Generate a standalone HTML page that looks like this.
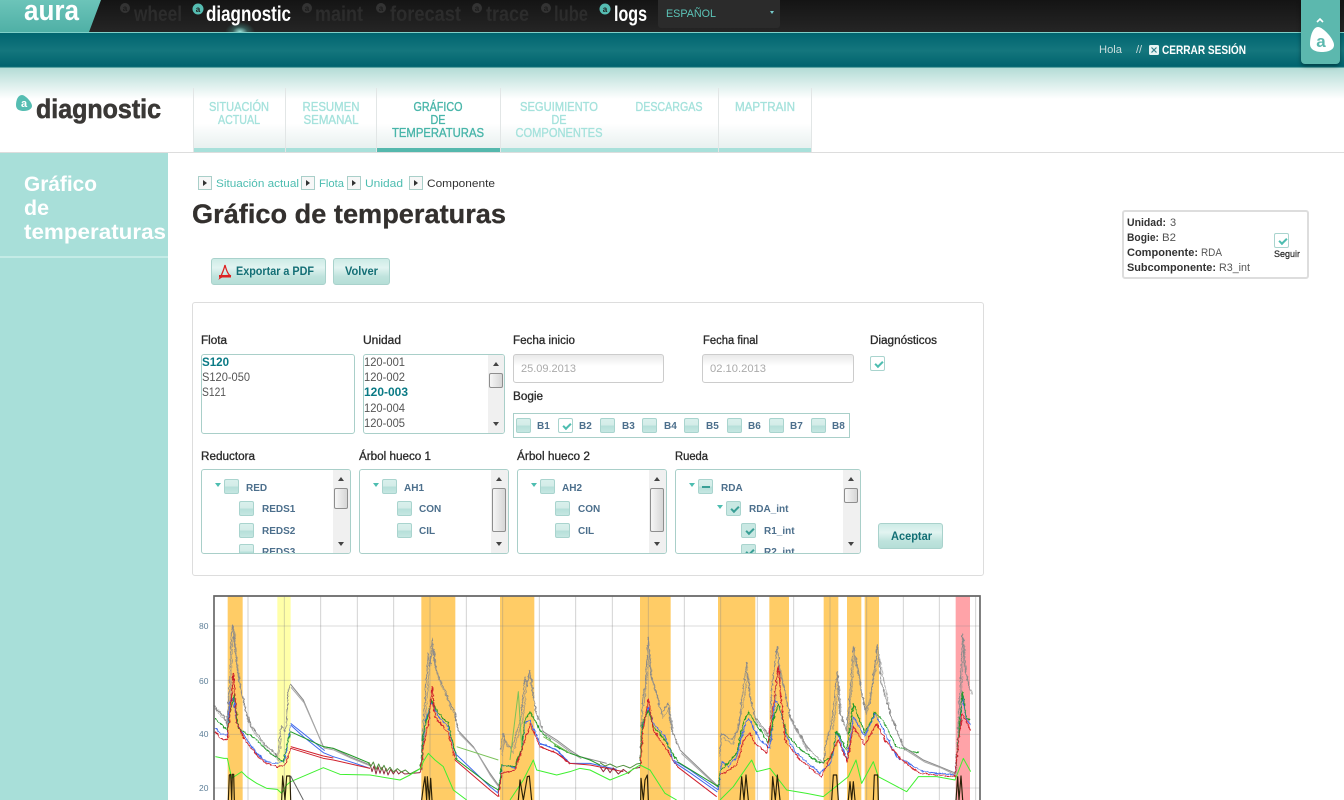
<!DOCTYPE html>
<html lang="es"><head><meta charset="utf-8"><title>Gráfico de temperaturas</title>
<style>
*{box-sizing:border-box}
html,body{margin:0;padding:0;width:1344px;height:800px;overflow:hidden;background:#fff}
body{position:relative;font-family:"Liberation Sans",sans-serif}
.a{position:absolute}
.cb{position:absolute;width:15px;height:15px;border:1px solid #a9d4ce;border-radius:2px;background:linear-gradient(#d9f0ec 0,#d3ece8 50%,#b5dfd9 52%,#c6e7e2 100%)}
.cb.on{background:#fff}
.cb.tint{background:#c9e8e3}
.cb.on::after,.cb.tint::after{content:"";position:absolute;left:4px;top:4px;width:6px;height:3px;border-left:2px solid #4dbdb0;border-bottom:2px solid #4dbdb0;transform:rotate(-45deg)}
.cb.tint::after{border-color:#3a9f96}
.cb.mn::after{content:"";position:absolute;left:3px;top:6px;width:8px;height:2px;background:#3a9f96}
.box{position:absolute;border:1px solid #a9cfc9;border-radius:3px;background:#fff;overflow:hidden}
.sb{position:absolute;right:0;top:0;bottom:0;width:17px;background:#f0f0f0}
.sb i{position:absolute;left:1px;width:14px;border:1px solid #8e8e8e;border-radius:2px;background:linear-gradient(90deg,#f6f6f6,#d6d6d6)}
.sb b{position:absolute;left:5px;width:0;height:0;border-left:3.5px solid transparent;border-right:3.5px solid transparent}
.sb b.u{top:7px;border-bottom:4px solid #444}.sb b.d{bottom:7px;border-top:4px solid #444}
.ar{position:absolute;width:0;height:0;border-left:3px solid transparent;border-right:3px solid transparent;border-top:4px solid #4dbdb0}
.btn{position:absolute;border:1px solid #a9d2cc;border-radius:3px;background:linear-gradient(#cdebe6 0,#e2f4f1 35%,#bfe3dd 70%,#b5ded7 100%)}
.bc{position:absolute;top:176px;width:14px;height:14px;border:1px solid #a9cfc9;background:#f7f7f7}
.bc::after{content:"";position:absolute;left:4px;top:3px;border-top:3px solid transparent;border-bottom:3px solid transparent;border-left:4px solid #333}
.tab{position:absolute;top:88px;height:64px;border-left:1px solid #e2e6e6;background:linear-gradient(transparent 55%,#e9f1f0 92%)}
.tab::after{content:"";position:absolute;left:0;right:0;bottom:0;height:4px;background:#a8e0da}
.tab.act::after{background:#55b8ad}
svg.ov{position:absolute;left:0;top:0}
.lab{font-size:11.5px;fill:#2a2a2a;stroke:#2a2a2a;stroke-width:.3}
.tree{font-size:10px;font-weight:bold;fill:#4c6f8c}
.lst{font-size:11.5px;fill:#555}
.tabt{font-size:13px;fill:#a5e2dc;stroke:#a5e2dc;stroke-width:.35}
.nav{font-size:21px;font-weight:bold;fill:#2c2c2c}
.navon{font-size:21px;font-weight:bold;fill:#fff}
.info{font-size:11px;fill:#555}
.infob{font-size:11px;fill:#333;font-weight:bold}
</style></head><body>
<!-- top dark bar -->
<div class="a" style="left:0;top:0;width:1344px;height:33px;background:linear-gradient(#141414,#252525);border-bottom:1px solid #7fd0c8"></div>
<div class="a" style="left:0;top:0;width:102px;height:32px;background:linear-gradient(#6cc4b9,#4fb0a6);clip-path:polygon(0 0,101px 0,89px 32px,0 32px)"></div>
<div class="a" style="left:225px;top:22px;width:30px;height:10px;background:radial-gradient(ellipse at 50% 100%,#9fe8de 0,rgba(80,180,170,.35) 35%,transparent 70%)"></div>
<div class="a" style="left:658px;top:0;width:122px;height:28px;background:#2b2b2b;border-radius:0 0 3px 3px"></div>
<div class="a" style="left:770px;top:11px;border-left:2.5px solid transparent;border-right:2.5px solid transparent;border-top:3px solid #7cc"></div>
<!-- teal bar -->
<div class="a" style="left:0;top:33px;width:1344px;height:35px;background:linear-gradient(#006570 0,#14767d 50%,#00636e 96%,#8fc9c2 100%)"></div>
<!-- header fade -->
<div class="a" style="left:0;top:68px;width:1344px;height:31px;background:linear-gradient(#b4dcd6,#fff)"></div>
<div class="a" style="left:1301px;top:0;width:39px;height:64px;background:#5cb8ae;border-radius:0 0 4px 4px;box-shadow:0 2px 4px rgba(0,0,0,.4)"></div>
<!-- tabs -->
<div class="tab" style="left:193px;width:92px"></div>
<div class="tab" style="left:285px;width:91px"></div>
<div class="tab act" style="left:376px;width:124px"></div>
<div class="tab" style="left:500px;width:218px"></div>
<div class="tab" style="left:718px;width:94px;border-right:1px solid #e2e6e6"></div>
<div class="a" style="left:0;top:152px;width:1344px;height:1px;background:#ddd"></div>
<!-- sidebar -->
<div class="a" style="left:0;top:153px;width:168px;height:647px;background:#a8dfd9"></div>
<div class="a" style="left:0;top:256px;width:168px;height:2px;background:#c4ebe6"></div>
<!-- breadcrumb -->
<div class="bc" style="left:198px"></div><div class="bc" style="left:301px"></div><div class="bc" style="left:347px"></div><div class="bc" style="left:409px"></div>
<!-- buttons -->
<div class="btn" style="left:211px;top:258px;width:115px;height:27px"></div>
<div class="btn" style="left:333px;top:258px;width:57px;height:27px"></div>
<!-- panel -->
<div class="a" style="left:192px;top:302px;width:792px;height:274px;border:1px solid #ddd;border-radius:3px"></div>
<div class="box" style="left:201px;top:354px;width:154px;height:80px"></div>
<div class="box" style="left:363px;top:354px;width:142px;height:80px"><div class="sb" style="width:16px"><b class="u"></b><i style="top:18px;height:15px"></i><b class="d"></b></div></div>
<div class="a" style="left:513px;top:354px;width:151px;height:29px;border:1px solid #ccc;border-radius:3px;background:linear-gradient(#e9e9e9,#fff 40%)"></div>
<div class="a" style="left:702px;top:354px;width:152px;height:29px;border:1px solid #ccc;border-radius:3px;background:linear-gradient(#e9e9e9,#fff 40%)"></div>
<div class="a" style="left:513px;top:413px;width:337px;height:25px;border:1px solid #a9cfc9"></div>
<div class="cb" style="left:516px;top:418px"></div><div class="cb on" style="left:558px;top:418px"></div><div class="cb" style="left:600px;top:418px"></div><div class="cb" style="left:642px;top:418px"></div><div class="cb" style="left:684px;top:418px"></div><div class="cb" style="left:727px;top:418px"></div><div class="cb" style="left:769px;top:418px"></div><div class="cb" style="left:811px;top:418px"></div>
<div class="cb on" style="left:870px;top:356px"></div>
<!-- tree boxes -->
<div class="box" style="left:201px;top:469px;width:150px;height:85px"><div class="sb"><b class="u"></b><i style="top:18px;height:21px"></i><b class="d"></b></div>
 <div class="ar" style="left:13px;top:13px"></div><div class="cb" style="left:22px;top:9px"></div><div class="cb" style="left:37px;top:31px"></div><div class="cb" style="left:37px;top:53px"></div><div class="cb" style="left:37px;top:74px"></div></div>
<div class="box" style="left:359px;top:469px;width:150px;height:85px"><div class="sb"><b class="u"></b><i style="top:18px;height:44px"></i><b class="d"></b></div>
 <div class="ar" style="left:13px;top:13px"></div><div class="cb" style="left:22px;top:9px"></div><div class="cb" style="left:37px;top:31px"></div><div class="cb" style="left:37px;top:53px"></div></div>
<div class="box" style="left:517px;top:469px;width:150px;height:85px"><div class="sb"><b class="u"></b><i style="top:18px;height:44px"></i><b class="d"></b></div>
 <div class="ar" style="left:13px;top:13px"></div><div class="cb" style="left:22px;top:9px"></div><div class="cb" style="left:37px;top:31px"></div><div class="cb" style="left:37px;top:53px"></div></div>
<div class="box" style="left:675px;top:469px;width:186px;height:85px"><div class="sb"><b class="u"></b><i style="top:18px;height:15px"></i><b class="d"></b></div>
 <div class="ar" style="left:13px;top:13px"></div><div class="cb mn" style="left:22px;top:9px"></div><div class="ar" style="left:41px;top:35px"></div><div class="cb tint" style="left:50px;top:31px"></div><div class="cb tint" style="left:65px;top:53px"></div><div class="cb tint" style="left:65px;top:74px"></div></div>
<div class="btn" style="left:878px;top:523px;width:65px;height:26px"></div>
<!-- info box -->
<div class="a" style="left:1122px;top:210px;width:187px;height:69px;border:2px solid #ddd;border-radius:3px"></div>
<div class="cb on" style="left:1274px;top:233px"></div>
<!-- chart -->
<svg class="a" style="left:190px;top:590px" width="800" height="210" viewBox="0 0 2400 630">
<defs><filter id="j" x="-2%" y="-5%" width="104%" height="110%"><feTurbulence type="fractalNoise" baseFrequency="0.09" numOctaves="3" seed="4"/><feDisplacementMap in="SourceGraphic" scale="10" xChannelSelector="R" yChannelSelector="G"/></filter></defs>
<g fill="#fc6">
<rect x="113" y="18" width="45" height="612"/><rect x="694" y="18" width="102" height="612"/><rect x="930" y="18" width="103" height="612"/>
<rect x="1350" y="18" width="92" height="612"/><rect x="1584" y="18" width="112" height="612"/><rect x="1738" y="18" width="59" height="612"/><rect x="1901" y="18" width="44" height="612"/><rect x="1971" y="18" width="43" height="612"/><rect x="2024" y="18" width="43" height="612"/>
</g>
<rect x="262" y="18" width="40" height="612" fill="#ffffa8"/><rect x="2297" y="18" width="43" height="612" fill="#ffa3a8"/>
<g stroke="#888" stroke-opacity=".38" stroke-width="3">
<path d="M174 18V630M283 18V630M392 18V630M502 18V630M611 18V630M720 18V630M829 18V630M938 18V630M1048 18V630M1157 18V630M1267 18V630M1375 18V630M1483 18V630M1592 18V630M1702 18V630M1811 18V630M1920 18V630M2030 18V630M2140 18V630M2248 18V630M2357 18V630"/>
<path d="M72 108H2370M72 271H2370M72 433H2370M72 594H2370" stroke-opacity=".3"/>
</g>
<g fill="none" stroke-width="3" stroke-linejoin="round">
<g filter="url(#j)">
<path stroke="#8a8a8a" d="M72 345 82 360 92 368 102 378 110 405 118 300 124 130 129 105 135 180 142 240 150 290 160 330 170 370 185 410 205 435 225 465 250 485 262 500 270 430 275 405 283 425 290 405 295 300 301 282M692 530 700 400 706 310 715 190 720 230 727 145 735 230 750 270 765 300 780 340 795 365 803 420M932 480 940 430 950 470 965 475 985 410 995 370 1005 260 1012 290 1018 240 1030 320 1040 370 1060 425M1350 520 1358 330 1365 290 1375 140 1382 250 1395 290 1415 370 1435 340 1445 420 1470 480M1588 500 1595 430 1610 440 1625 450 1645 420 1655 330 1670 220 1680 320 1695 380 1740 440 1745 290 1762 170 1770 250 1785 310 1800 380 1850 470 1900 520 1905 470 1925 400 1942 245 1950 370 1970 420 1978 340 1990 170 2005 240 2025 360 2040 340 2062 165 2075 280 2100 370 2140 470M2298 550 2305 400 2318 130 2325 240 2342 300"/>
<path stroke="#8a8a8a" transform="translate(4 8)" stroke-opacity=".7" d="M72 345 82 362 92 372 102 382 110 408 118 310 124 150 129 115 135 190 142 250 150 300 160 340 170 380 185 415 205 440 225 470 250 490 262 505 270 435M692 530 700 420 715 210 727 165 735 240 750 280 765 310 780 350 795 370M932 490 940 440 965 480 995 380 1005 270 1018 250 1030 330 1040 380M1358 340 1375 170 1382 260 1415 375 1435 345 1445 425M1595 435 1625 455 1655 340 1670 240 1680 330 1695 385 1740 445 1762 200 1785 320 1800 385 1850 475M1925 410 1942 265 1950 375 1970 425 1990 190 2025 365 2062 185 2100 375 2140 475M2305 410 2318 150 2325 250 2342 305"/>
<path stroke="#3f68ec" d="M76 415 90 430 112 435 118 340 125 330 131 320 140 400 165 440 200 490 230 515 260 520 285 510 292 470 302 405"/>
<path stroke="#1f9a25" d="M76 385 90 400 112 420 120 370 133 312 145 415 170 430 200 450 240 490 280 515 290 470 302 425"/>
<path stroke="#c81c2c" d="M76 425 90 445 112 450 120 370 131 250 140 400 165 450 200 495 230 520 262 530 285 525 302 475"/>
<path stroke="#3f68ec" d="M692 545 700 440 710 380 725 335 745 380 775 410 795 490M925 610 935 530 950 525 975 535 995 480 1005 400 1020 390 1050 460 1100 480 1140 520M1350 530 1358 410 1375 350 1390 400 1425 440 1450 510M1585 600 1595 515 1615 530 1640 500 1660 420 1675 385 1710 450 1740 475 1755 330 1765 340 1790 440 1820 490 1890 550 1925 515 1940 425 1972 510 1990 380 2025 440 2055 370 2080 420 2120 500 2200 545 2295 555 2305 450 2317 320 2330 390 2342 405"/>
<path stroke="#1f9a25" d="M692 540 700 430 725 330 745 370 775 400 800 505M925 600 935 525 975 530 995 475 1005 390 1020 365 1050 420 1100 470 1140 490M1350 522 1358 400 1375 360 1390 410 1425 450 1462 515M1585 590 1590 545 1640 490 1660 400 1675 365 1710 420 1735 460 1755 370 1765 340 1790 430 1820 470 1890 520 1925 500 1940 425 1970 480 1990 340 2025 430 2055 365 2080 395 2120 470 2185 490M2298 530 2305 440 2318 305 2330 385 2342 390"/>
<path stroke="#d0202c" d="M692 548 700 470 715 400 727 290 735 380 775 430 795 510M925 620 935 550 975 540 995 480 1005 450 1020 400 1050 470 1100 490 1140 520M1350 535 1358 430 1375 325 1390 420 1425 470 1462 530M1590 555 1640 525 1660 450 1680 430 1695 460 1730 490 1755 310 1765 230 1785 450 1830 510 1895 560 1930 480 1945 450 1972 515 1990 410 2025 465 2060 400 2085 450 2140 515 2190 550 2295 560 2305 450 2317 370 2342 420"/>
</g>
<!-- long straight segments -->
<path stroke="#8a8a8a" d="M301 282 340 330 400 470 430 475 480 500 540 525M803 420 850 470 900 550 925 585M1060 425 1100 450 1140 480 1170 500 1250 520M1470 480 1580 585M2140 470 2200 510 2250 530 2298 550"/>
<path stroke="#a8a8a8" d="M303 292 342 338 402 474 432 480 482 504 542 528M807 430 855 478 902 558 927 592M1064 432 1104 458 1144 488 1174 506M1474 490 1584 592M2144 478 2204 516 2254 534 2298 555"/>
<path stroke="#3f68ec" d="M302 405 340 440 400 488 430 500 480 515 540 535M302 400 342 432 404 482M795 490 900 590 925 610M1050 460 1100 480 1140 520 1200 520 1280 538M1450 510 1500 540 1585 600M1450 515 1500 548 1582 606"/>
<path stroke="#d0202c" d="M302 475 400 505 430 510 540 535M302 470 400 498 430 504M795 510 900 600 925 620M1050 470 1100 490 1140 520 1200 525 1300 545M1462 530 1580 620"/>
<path stroke="#1f9a25" d="M302 425 400 470 430 475 480 495 540 520M795 505 900 585 925 600M1100 470 1140 490 1200 510 1230 525M1462 515 1585 590"/>
<path stroke="#7ac25a" d="M800 470 925 510M960 510 985 305 995 470M1060 440 1140 490"/>
<!-- plateau noise -->
<path stroke="#8f2a3c" d="M540 522 546 545 552 528 558 552 564 530 570 550 576 532 582 552 588 535 594 555 602 538 610 552 618 540 626 552 634 545 644 552 690 548"/>
<path stroke="#4f8f3c" d="M535 518 542 530 550 516 558 538 566 522 574 540 582 526 590 544 600 532 610 546 622 536 634 546 646 540 660 552 692 535"/>
<path stroke="#8f2a3c" d="M1230 530 1240 545 1250 532 1260 548 1270 534 1285 552 1300 538 1315 550 1330 536 1350 532"/>
<path stroke="#4f8f3c" d="M1230 518 1245 528 1260 522 1280 532 1300 526 1320 534 1340 522 1350 520"/>
<!-- light green -->
<path stroke="#3ff030" d="M76 500 102 505 112 505 125 565 140 555 155 545 170 560 200 580 230 595 262 598 275 610 290 585 302 575 400 533 450 553 540 555 600 565 630 570 660 555 692 535 700 515 715 490 735 510 760 530 790 600 830 630M960 630 1000 570 1030 510 1040 540 1100 555 1140 545 1170 535 1200 540 1260 570 1310 550 1350 525 1380 540 1425 610 1460 630M1590 630 1630 590 1685 510 1700 545 1740 535 1790 600 1850 610 1900 620 1975 560 1998 510 2015 580 2050 515 2065 560 2150 605 2185 560 2240 560 2295 570 2320 505 2342 545"/>
<!-- black -->
<path stroke="#2a2008" stroke-width="3.500" d="M115 630 118 555 122 553 125 630 127 553 131 553 133 630M275 630 278 558 285 630 290 558 300 558 302 630M695 630 700 590 705 560 710 630 712 560 718 630 722 565 726 630M985 630 990 570 1000 630 1012 560 1018 558 1025 630M1352 630 1353 565 1360 630 1365 570 1372 555 1375 630M1650 630 1655 560 1662 630 1668 555 1675 630M1745 630 1748 560 1756 630 1762 555 1770 630M1925 630 1930 555 1940 555 1945 630M1975 630 1980 575 1985 630 1990 575 1995 630M2050 630 2053 555 2063 555 2065 630M2298 630 2303 560 2307 630 2313 558 2318 630"/>
<path stroke="#666" d="M302 558 340 630"/>
</g>
<path d="M72 630V18H2370V630" fill="none" stroke="#666" stroke-width="5"/>
</svg>
<!-- all text -->
<svg class="ov" width="1344" height="800" viewBox="0 0 1344 800" font-family="'Liberation Sans',sans-serif">
<!-- aura logo -->
<text x="24" y="20" font-size="29" font-weight="bold" fill="#fff" textLength="55" lengthAdjust="spacingAndGlyphs">aura</text>
<!-- nav -->
<g fill="#333"><circle cx="125" cy="8" r="5"/><circle cx="307" cy="8" r="5"/><circle cx="381" cy="8" r="5"/><circle cx="477" cy="8" r="5"/><circle cx="546" cy="8" r="5"/></g>
<g fill="#55bdb2"><circle cx="198" cy="9" r="5.500"/><circle cx="605" cy="9" r="5.500"/></g>
<g font-size="8" font-weight="bold" text-anchor="middle"><text x="125" y="11" fill="#1c1c1c">a</text><text x="307" y="11" fill="#1c1c1c">a</text><text x="381" y="11" fill="#1c1c1c">a</text><text x="477" y="11" fill="#1c1c1c">a</text><text x="546" y="11" fill="#1c1c1c">a</text><text x="198" y="12" fill="#1c1c1c">a</text><text x="605" y="12" fill="#1c1c1c">a</text></g>
<text class="nav" x="134" y="21" textLength="48" lengthAdjust="spacingAndGlyphs">wheel</text>
<text class="navon" x="206" y="21" textLength="85" lengthAdjust="spacingAndGlyphs">diagnostic</text>
<text class="nav" x="315" y="21" textLength="48" lengthAdjust="spacingAndGlyphs">maint</text>
<text class="nav" x="390" y="21" textLength="71" lengthAdjust="spacingAndGlyphs">forecast</text>
<text class="nav" x="486" y="21" textLength="43" lengthAdjust="spacingAndGlyphs">trace</text>
<text class="nav" x="554" y="21" textLength="34" lengthAdjust="spacingAndGlyphs">lube</text>
<text class="navon" x="614" y="21" textLength="33" lengthAdjust="spacingAndGlyphs">logs</text>
<text x="666" y="17" font-size="11" fill="#5cc4b8" textLength="50" lengthAdjust="spacingAndGlyphs">ESPAÑOL</text>
<!-- user -->
<text x="1099" y="53" font-size="11" fill="#c8dcdc" textLength="23" lengthAdjust="spacingAndGlyphs">Hola</text>
<text x="1136" y="53" font-size="11" fill="#c8dcdc">//</text>
<rect x="1149" y="45" width="10" height="10" rx="1.500" fill="#e8f4f4"/><path d="M1151.500 47.500l5 5m0-5l-5 5" stroke="#33808a" stroke-width="1.200"/>
<text x="1162" y="54" font-size="11.500" font-weight="bold" fill="#fff" textLength="84" lengthAdjust="spacingAndGlyphs">CERRAR SESIÓN</text>
<!-- right tab icon -->
<path d="M1317 22l3-3 3 3" fill="none" stroke="#fff" stroke-width="1.600"/>
<path d="M1318 27c5 0 16 12 16 18 0 5-6 7-12 7s-12-2-12-8c0-8 3-17 8-17z" fill="#fff"/>
<text x="1321" y="47" font-size="17" font-weight="bold" fill="#5cb8ae" text-anchor="middle">a</text>
<!-- brand -->
<path d="M22 95c3 0 10 7 10 11 0 3-4 5-8 5s-8-1-8-6c0-5 2-10 6-10z" fill="#55bdb2"/><text x="24" y="107" font-size="11" font-weight="bold" fill="#fff" text-anchor="middle">a</text>
<text x="36" y="118" font-size="27" font-weight="bold" fill="#3a3836" stroke="#3a3836" stroke-width=".6" textLength="125" lengthAdjust="spacingAndGlyphs">diagnostic</text>
<!-- tabs text -->
<g class="tabt" text-anchor="middle">
<text x="239" y="111" textLength="60" lengthAdjust="spacingAndGlyphs">SITUACIÓN</text><text x="239" y="124" textLength="42" lengthAdjust="spacingAndGlyphs">ACTUAL</text>
<text x="331" y="111" textLength="57" lengthAdjust="spacingAndGlyphs">RESUMEN</text><text x="331" y="124" textLength="55" lengthAdjust="spacingAndGlyphs">SEMANAL</text>
<g style="fill:#48b5a9;stroke:#48b5a9"><text x="438" y="111" textLength="49" lengthAdjust="spacingAndGlyphs">GRÁFICO</text><text x="438" y="124" textLength="15" lengthAdjust="spacingAndGlyphs">DE</text><text x="438" y="137" textLength="92" lengthAdjust="spacingAndGlyphs">TEMPERATURAS</text></g>
<text x="559" y="111" textLength="78" lengthAdjust="spacingAndGlyphs">SEGUIMIENTO</text><text x="559" y="124" textLength="15" lengthAdjust="spacingAndGlyphs">DE</text><text x="559" y="137" textLength="87" lengthAdjust="spacingAndGlyphs">COMPONENTES</text>
<text x="669" y="111" textLength="67" lengthAdjust="spacingAndGlyphs">DESCARGAS</text>
<text x="765" y="111" textLength="60" lengthAdjust="spacingAndGlyphs">MAPTRAIN</text>
</g>
<!-- sidebar title -->
<g font-size="21" font-weight="bold" fill="#fff">
<text x="24" y="191" textLength="73" lengthAdjust="spacingAndGlyphs">Gráfico</text><text x="24" y="215" textLength="25" lengthAdjust="spacingAndGlyphs">de</text><text x="24" y="239" textLength="142" lengthAdjust="spacingAndGlyphs">temperaturas</text>
</g>
<!-- breadcrumb -->
<g font-size="11">
<text x="216" y="187" fill="#4dbdb0" textLength="83" lengthAdjust="spacingAndGlyphs">Situación actual</text>
<text x="319" y="187" fill="#4dbdb0" textLength="25" lengthAdjust="spacingAndGlyphs">Flota</text>
<text x="365" y="187" fill="#4dbdb0" textLength="38" lengthAdjust="spacingAndGlyphs">Unidad</text>
<text x="427" y="187" fill="#333" textLength="68" lengthAdjust="spacingAndGlyphs">Componente</text>
</g>
<text x="192" y="223" font-size="27" font-weight="bold" fill="#33302e" stroke="#33302e" stroke-width=".3" textLength="314" lengthAdjust="spacingAndGlyphs">Gráfico de temperaturas</text>
<!-- buttons -->
<path d="M225 265c1 4 3 10 6 11-4-1-8 0-11 2 2-4 4-9 5-13z" fill="none" stroke="#d22" stroke-width="1.300"/><rect x="219" y="275" width="12" height="2.500" fill="#d22"/>
<text x="236" y="275" font-size="11.500" font-weight="bold" fill="#136f75" textLength="78" lengthAdjust="spacingAndGlyphs">Exportar a PDF</text>
<text x="345" y="275" font-size="11.500" font-weight="bold" fill="#136f75" textLength="33" lengthAdjust="spacingAndGlyphs">Volver</text>
<text x="891" y="540" font-size="11.500" font-weight="bold" fill="#136f75" textLength="41" lengthAdjust="spacingAndGlyphs">Aceptar</text>
<!-- labels -->
<text class="lab" x="201" y="344" textLength="26" lengthAdjust="spacingAndGlyphs">Flota</text>
<text class="lab" x="363" y="344" textLength="38" lengthAdjust="spacingAndGlyphs">Unidad</text>
<text class="lab" x="513" y="344" textLength="62" lengthAdjust="spacingAndGlyphs">Fecha inicio</text>
<text class="lab" x="703" y="344" textLength="55" lengthAdjust="spacingAndGlyphs">Fecha final</text>
<text class="lab" x="870" y="344" textLength="67" lengthAdjust="spacingAndGlyphs">Diagnósticos</text>
<text class="lab" x="513" y="400" textLength="30" lengthAdjust="spacingAndGlyphs">Bogie</text>
<text class="lab" x="201" y="460" textLength="54" lengthAdjust="spacingAndGlyphs">Reductora</text>
<text class="lab" x="359" y="460" textLength="72" lengthAdjust="spacingAndGlyphs">Árbol hueco 1</text>
<text class="lab" x="517" y="460" textLength="73" lengthAdjust="spacingAndGlyphs">Árbol hueco 2</text>
<text class="lab" x="675" y="460" textLength="33" lengthAdjust="spacingAndGlyphs">Rueda</text>
<!-- lists -->
<text x="202" y="366" font-size="11.500" font-weight="bold" fill="#0a7a85" textLength="27" lengthAdjust="spacingAndGlyphs">S120</text>
<text class="lst" x="202" y="381" textLength="48" lengthAdjust="spacingAndGlyphs">S120-050</text>
<text class="lst" x="202" y="396" textLength="24" lengthAdjust="spacingAndGlyphs">S121</text>
<text class="lst" x="364" y="366" textLength="41" lengthAdjust="spacingAndGlyphs">120-001</text>
<text class="lst" x="364" y="381" textLength="41" lengthAdjust="spacingAndGlyphs">120-002</text>
<text x="364" y="396" font-size="11.500" font-weight="bold" fill="#0a7a85" textLength="44" lengthAdjust="spacingAndGlyphs">120-003</text>
<text class="lst" x="364" y="412" textLength="41" lengthAdjust="spacingAndGlyphs">120-004</text>
<text class="lst" x="364" y="427" textLength="41" lengthAdjust="spacingAndGlyphs">120-005</text>
<text x="521" y="372" font-size="11" fill="#aaa" textLength="55" lengthAdjust="spacingAndGlyphs">25.09.2013</text>
<text x="710" y="372" font-size="11" fill="#aaa" textLength="56" lengthAdjust="spacingAndGlyphs">02.10.2013</text>
<!-- bogies -->
<g class="tree"><text x="537" y="429">B1</text><text x="579" y="429">B2</text><text x="622" y="429">B3</text><text x="664" y="429">B4</text><text x="706" y="429">B5</text><text x="748" y="429">B6</text><text x="790" y="429">B7</text><text x="832" y="429">B8</text>
<text x="246" y="491">RED</text><text x="262" y="512">REDS1</text><text x="262" y="534">REDS2</text>
<text x="404" y="491">AH1</text><text x="419" y="512">CON</text><text x="419" y="534">CIL</text>
<text x="562" y="491">AH2</text><text x="578" y="512">CON</text><text x="578" y="534">CIL</text>
<text x="721" y="491">RDA</text><text x="749" y="512">RDA_int</text><text x="764" y="534">R1_int</text></g>
<!-- clipped tree rows -->
<svg x="0" y="540" width="1344" height="13"><g class="tree"><text x="262" y="15">REDS3</text><text x="764" y="15">R2_int</text></g></svg>
<!-- info -->
<text class="infob" x="1127" y="226" textLength="39" lengthAdjust="spacingAndGlyphs">Unidad:</text><text class="info" x="1170" y="226">3</text>
<text class="infob" x="1127" y="241" textLength="32" lengthAdjust="spacingAndGlyphs">Bogie:</text><text class="info" x="1162" y="241" textLength="14" lengthAdjust="spacingAndGlyphs">B2</text>
<text class="infob" x="1127" y="256" textLength="71" lengthAdjust="spacingAndGlyphs">Componente:</text><text class="info" x="1201" y="256" textLength="21" lengthAdjust="spacingAndGlyphs">RDA</text>
<text class="infob" x="1127" y="271" textLength="89" lengthAdjust="spacingAndGlyphs">Subcomponente:</text><text class="info" x="1219" y="271" textLength="31" lengthAdjust="spacingAndGlyphs">R3_int</text>
<text x="1274" y="257" font-size="9.500" fill="#222" stroke="#222" stroke-width=".2" textLength="26" lengthAdjust="spacingAndGlyphs">Seguir</text>
<!-- axis -->
<g font-size="8.500" fill="#5f8099"><text x="199" y="629">80</text><text x="199" y="684">60</text><text x="199" y="737">40</text><text x="199" y="791">20</text></g>
</svg>
</body></html>
